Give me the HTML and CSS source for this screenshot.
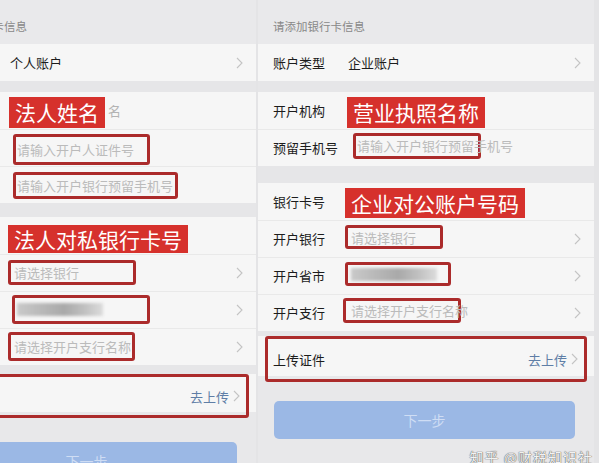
FILE: index.html
```html
<!DOCTYPE html>
<html lang="zh-CN">
  <head>
    <meta charset="UTF-8" />
    <meta name="viewport" content="width=device-width, initial-scale=1.0" />
    <title>添加银行卡</title>
    <link rel="stylesheet" href="styles.css">
  </head>

  <body>
    <div class="page">
      <!-- 个人账户 (cropped on the left) -->
      <div class="panel panel-left">
        <div class="screen">
          <div class="section-title">请添加银行卡信息</div>
          <div class="row">
            <span class="label">账户类型</span>
            <span class="value">个人账户</span>
            <svg class="chev" viewBox="0 0 7 12"><polyline points="1,1 6,6 1,11" /></svg>
          </div>
          <div class="gap g11"></div>
          <div class="row">
            <span class="label">开户名</span>
            <span class="tag">法人姓名</span>
            <span class="hint">名</span>
          </div>
          <div class="row line">
            <span class="label">法人证件号</span>
            <span class="box l-id"><span class="ph">请输入开户人证件号</span></span>
          </div>
          <div class="row line">
            <span class="label">预留手机号</span>
            <span class="box l-phone"><span class="ph">请输入开户银行预留手机号</span></span>
          </div>
          <div class="gap g14"></div>
          <div class="row">
            <span class="label">银行卡号</span>
            <span class="tag tag-low">法人对私银行卡号</span>
          </div>
          <div class="row line">
            <span class="label">开户银行</span>
            <span class="box l-bank"><span class="ph">请选择银行</span></span>
            <svg class="chev" viewBox="0 0 7 12"><polyline points="1,1 6,6 1,11" /></svg>
          </div>
          <div class="row line">
            <span class="label">开户省市</span>
            <span class="box l-city"><span class="blur"></span></span>
            <svg class="chev" viewBox="0 0 7 12"><polyline points="1,1 6,6 1,11" /></svg>
          </div>
          <div class="row line">
            <span class="label">开户支行</span>
            <span class="box l-branch"><span class="ph">请选择开户支行名称</span></span>
            <svg class="chev" viewBox="0 0 7 12"><polyline points="1,1 6,6 1,11" /></svg>
          </div>
          <div class="gap g12"></div>
          <div class="upload l-upload">
            <div class="upload-mark">
              <span class="label">上传证件</span>
              <span class="go">去上传</span>
              <svg class="chev" viewBox="0 0 7 12"><polyline points="1,1 6,6 1,11" /></svg>
            </div>
          </div>
          <div class="btn-wrap l-btn">
            <div class="next">下一步</div>
          </div>
        </div>
      </div>

      <!-- 企业账户 -->
      <div class="panel panel-right">
        <div class="screen">
          <div class="section-title">请添加银行卡信息</div>
          <div class="row">
            <span class="label">账户类型</span>
            <span class="value">企业账户</span>
            <svg class="chev" viewBox="0 0 7 12"><polyline points="1,1 6,6 1,11" /></svg>
          </div>
          <div class="gap g11"></div>
          <div class="row">
            <span class="label">开户机构</span>
            <span class="tag">营业执照名称</span>
          </div>
          <div class="row line">
            <span class="label">预留手机号</span>
            <span class="box r-phone"><span class="ph">请输入开户银行预留手机号</span></span>
          </div>
          <div class="gap g17"></div>
          <div class="row">
            <span class="label">银行卡号</span>
            <span class="tag tag-mid">企业对公账户号码</span>
          </div>
          <div class="row line">
            <span class="label">开户银行</span>
            <span class="box r-bank"><span class="ph">请选择银行</span></span>
            <svg class="chev" viewBox="0 0 7 12"><polyline points="1,1 6,6 1,11" /></svg>
          </div>
          <div class="row line">
            <span class="label">开户省市</span>
            <span class="box r-city"><span class="blur"></span></span>
            <svg class="chev" viewBox="0 0 7 12"><polyline points="1,1 6,6 1,11" /></svg>
          </div>
          <div class="row line">
            <span class="label">开户支行</span>
            <span class="box r-branch"><span class="ph">请选择开户支行名称</span></span>
            <svg class="chev" viewBox="0 0 7 12"><polyline points="1,1 6,6 1,11" /></svg>
          </div>
          <div class="gap g8"></div>
          <div class="upload r-upload">
            <div class="upload-mark">
              <span class="label">上传证件</span>
              <span class="go">去上传</span>
              <svg class="chev" viewBox="0 0 7 12"><polyline points="1,1 6,6 1,11" /></svg>
            </div>
          </div>
          <div class="btn-wrap r-btn">
            <div class="next">下一步</div>
          </div>
        </div>
      </div>
    </div>

    <div class="watermark">知乎 @财税知识社</div>
  </body>
</html>
```

FILE: styles.css
```css
* {
  margin: 0;
  padding: 0;
  box-sizing: border-box;
}

body {
  width: 599px;
  height: 463px;
  overflow: hidden;
  background-color: #e4e4e6;
  font-family: "Noto Sans CJK SC", "Noto Sans", sans-serif;
  color: #1c1c1c;
  position: relative;
}

.page {
  display: flex;
  height: 463px;
}

.panel {
  width: 336px;
  height: 463px;
  overflow: hidden;
  background-color: #e8e8ea;
  flex-shrink: 0;
}

.panel-left {
  width: 256px;
}

.panel-left .screen {
  margin-left: -80px;
}

.panel-right {
  margin-left: 2px;
}

.screen {
  width: 336px;
}

.section-title {
  height: 44px;
  padding: 18px 0 0 15px;
  font-size: 11.5px;
  color: #888888;
  background-color: #e9e9eb;
}

.row {
  display: flex;
  align-items: center;
  height: 37px;
  padding: 0 13px 0 15px;
  background-color: #f6f6f6;
  font-size: 13px;
  white-space: nowrap;
}

.row.line {
  box-shadow: inset 0 1px 0 #e9e9e9;
}

.label {
  width: 75px;
  flex-shrink: 0;
  color: #1c1c1c;
}

.value {
  color: #1c1c1c;
}

.hint {
  color: #b3b3b3;
  margin-left: 3px;
}

.chev {
  margin-left: auto;
  width: 7px;
  height: 12px;
  fill: none;
  stroke: #c4c4c4;
  stroke-width: 1.1;
  flex-shrink: 0;
}

.gap {
  background-color: #e6e6e8;
}

.g8 { height: 8px; }
.g11 { height: 11px; }
.g12 { height: 12px; }
.g14 { height: 14px; }
.g17 { height: 17px; }

/* red filled notes */
.tag {
  display: block;
  height: 31px;
  padding: 0 6px;
  margin-left: -1px;
  margin-top: 3px;
  background-color: #d6312c;
  color: #ffffff;
  font-size: 21px;
  line-height: 31px;
}

.tag-low {
  height: 28px;
  line-height: 28px;
  margin-left: -2px;
  margin-top: 6px;
}

.tag-mid {
  height: 30px;
  line-height: 30px;
  margin-left: -3px;
}

/* red outline notes */
.box {
  display: flex;
  align-items: center;
  height: 28px;
  border: 3px solid #ab2b2b;
  border-radius: 3px;
  padding-left: 1px;
  white-space: nowrap;
}

.ph {
  color: #bbbbbb;
  font-size: 13px;
}

.blur {
  display: block;
  width: 86px;
  height: 13px;
  background: linear-gradient(90deg, #c9c9c9, #a9a9a9 55%, #c2c2c2 80%, #dcdcdc);
  filter: blur(1.5px);
}

.l-id { width: 137px; height: 31px; margin-left: 3px; margin-top: 3px; }
.l-phone { width: 165px; height: 27px; margin-left: 3px; margin-top: 2px; }
.l-bank { width: 128px; height: 25px; margin-left: -2px; padding-left: 3px; }
.l-city { width: 138px; height: 29px; margin-left: 2px; padding-left: 2px; }
.l-branch { width: 127px; height: 29px; margin-left: -2px; padding-left: 3px; }

.r-phone { width: 128px; height: 26px; margin-left: 5px; margin-top: -4px; }
.r-bank { width: 98px; height: 24px; margin-left: -3px; margin-top: -3px; padding-left: 3px; }
.r-city { width: 106px; height: 24px; margin-left: -3px; margin-top: -3px; padding-left: 3px; }
.r-branch { width: 118px; height: 25px; margin-left: -5px; margin-top: -4px; padding-left: 5px; }

.upload {
  height: 38px;
  padding: 0 7px 0 7px;
  background-color: #f6f6f6;
}

.r-upload {
  height: 40px;
}

.upload-mark {
  display: flex;
  align-items: center;
  height: calc(100% + 6px);
  margin-top: -3px;
  padding: 0 6px 0 5px;
  border: 3px solid #ab2b2b;
  border-radius: 3px;
  font-size: 13px;
  white-space: nowrap;
}

.go {
  margin-left: auto;
  color: #5f7ea6;
}

.upload-mark .chev {
  margin-left: 4px;
}

.btn-wrap {
  padding: 0 19px 0 16px;
}

.l-btn {
  padding-top: 30px;
}

.r-btn {
  padding-top: 25px;
}

.next {
  height: 38px;
  border-radius: 5px;
  background-color: #9bb8e5;
  color: #cfddf4;
  font-size: 14px;
  line-height: 38px;
  text-align: center;
}

.watermark {
  position: absolute;
  right: 6px;
  bottom: -4px;
  font-size: 14px;
  color: #f2f2f2;
  letter-spacing: 1px;
  text-shadow: 0 0 1px #555555, 0 0 1px #555555;
}
```
